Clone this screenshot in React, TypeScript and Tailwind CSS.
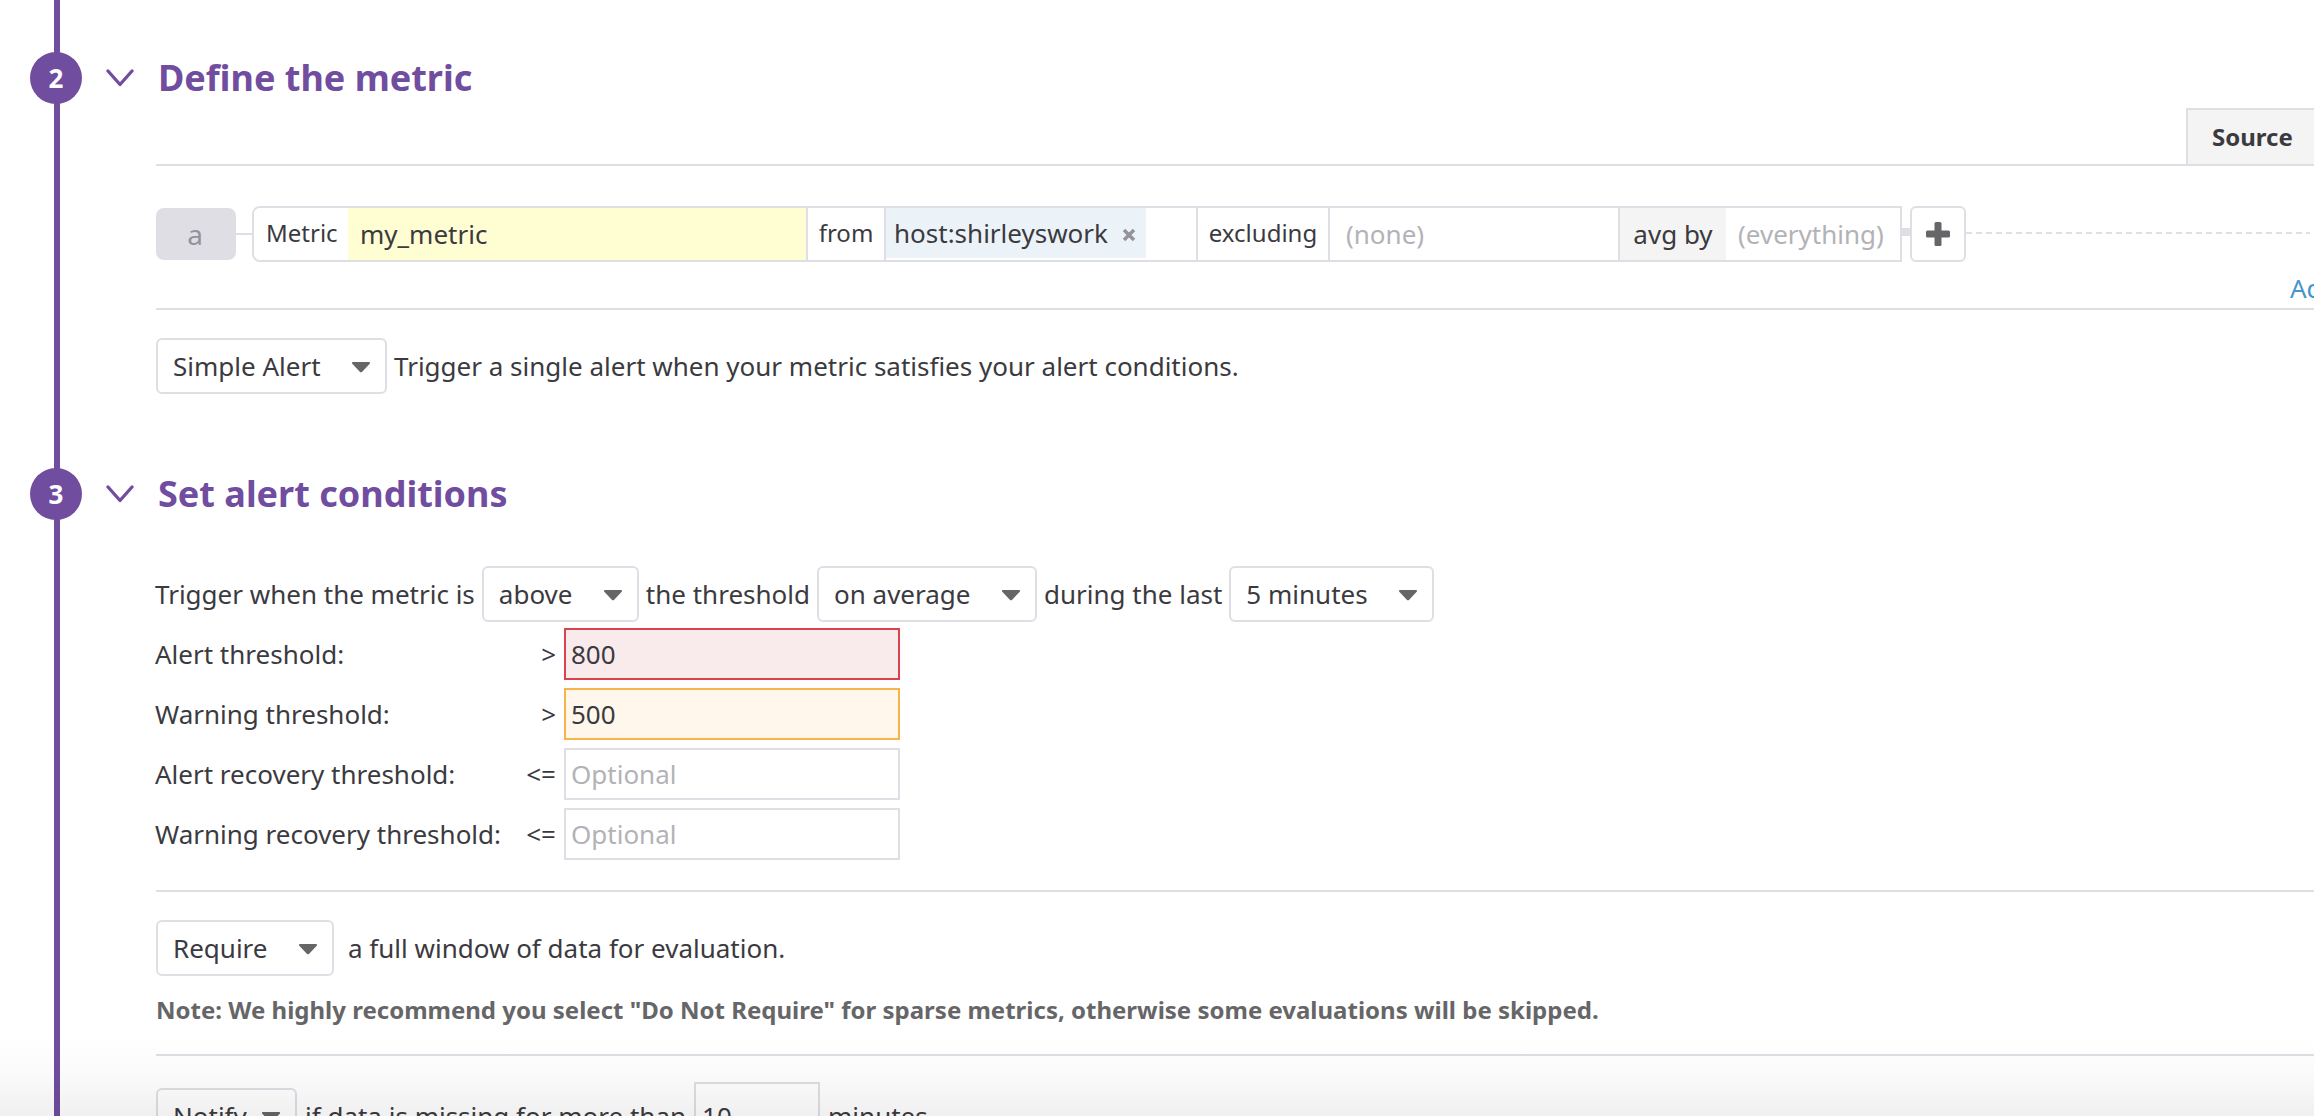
import type { ReactNode } from "react";

const label = "flex items-center bg-white pb-0.5 text-2xl";

function Step({ number, title, className, children }: { number: number; title: string; className: string; children: ReactNode }) {
  return (
    <section className={`relative pt-[52px] ${className}`}>
      <div className="absolute inset-y-0 left-[54px] w-1.5 bg-[#704d9f]" />
      <header className="relative flex h-[52px] items-center pl-[30px] text-[#704d9f]">
        <span className="flex size-[52px] items-center justify-center rounded-full bg-[#704d9f] text-[26px] font-bold text-white">{number}</span>
        <button type="button" aria-label={`Collapse ${title}`} className="ml-6 flex w-[50px]">
          <svg width="28" height="18" viewBox="0 0 28 18" fill="none" stroke="currentColor" strokeWidth="3.300" strokeLinecap="round" strokeLinejoin="round">
            <path d="M2 2 14 15.500 26 2" />
          </svg>
        </button>
        <h2 className="ml-0.5 text-4xl font-bold">{title}</h2>
      </header>
      <div className="pl-[155px]">{children}</div>
    </section>
  );
}

function Dropdown({ value, name, tight = false }: { value: string; name: string; tight?: boolean }) {
  return (
    <span className="relative inline-flex">
      <select
        aria-label={name}
        className={`h-14 appearance-none rounded-md border-2 border-[#dfdee4] bg-white pl-[15px] ${tight ? "pr-12" : "pr-16"}`}
      >
        <option>{value}</option>
      </select>
      <svg className="pointer-events-none absolute right-4 top-6 text-[#666668]" width="20" height="11" viewBox="0 0 20 11" fill="currentColor">
        <path d="M2 0h16c1 0 1.400 1 .7 1.700l-7.500 8c-.7.700-1.700.700-2.400 0l-7.500-8C.6 1 1 0 2 0Z" />
      </svg>
    </span>
  );
}

const thresholds = [
  { id: "alert", text: "Alert threshold:", sign: ">", value: "800", style: "border-[#d9434e] bg-[#f9ebec]" },
  { id: "warning", text: "Warning threshold:", sign: ">", value: "500", style: "border-[#f5b54a] bg-[#fff7ec]" },
  { id: "alert-recovery", text: "Alert recovery threshold:", sign: "<=", value: "", style: "border-[#dfdee4] bg-white" },
  { id: "warning-recovery", text: "Warning recovery threshold:", sign: "<=", value: "", style: "border-[#dfdee4] bg-white" },
];

function Query() {
  return (
    <div className="flex h-14 items-center">
      <span className="flex h-[52px] w-20 items-center justify-center rounded-lg bg-[#dfdee4] pr-0.5 text-[28px] text-[#949398]">a</span>
      <span className="h-0.5 w-4 bg-[#dfdee4]" />
      <div className="flex h-14 rounded-l-lg border-2 border-[#dfdee4]">
        <label htmlFor="metric" className={`${label} w-[94px] rounded-l-md pl-3`}>Metric</label>
        <input id="metric" defaultValue="my_metric" className="w-[460px] border-r-2 border-[#dfdee4] bg-[#fffed2] px-3" />
        <span className={`${label} w-[78px] justify-center border-r-2 border-[#dfdee4]`}>from</span>
        <div className="flex w-[312px] border-r-2 border-[#dfdee4]">
          <span className="flex h-[50px] w-[260px] items-center bg-[#ebf3f9] pl-2">
            host:shirleyswork
            <button type="button" aria-label="Remove host:shirleyswork" className="ml-3.5 mt-1 text-[#949398]">
              <svg width="14" height="14" viewBox="0 0 14 14" stroke="currentColor" strokeWidth="3.500">
                <path d="M2 2l10 10M12 2 2 12" />
              </svg>
            </button>
          </span>
        </div>
        <label htmlFor="excluding" className={`${label} w-[132px] justify-center border-r-2 border-[#dfdee4]`}>excluding</label>
        <input id="excluding" placeholder="(none)" className="w-[290px] border-r-2 border-[#dfdee4] px-4 placeholder:text-[#b3b2b7]" />
        <label htmlFor="group" className="flex w-[106px] items-center justify-center bg-[#f4f4f4]">avg by</label>
        <input id="group" placeholder="(everything)" className="w-[174px] pl-3 placeholder:text-[#b3b2b7]" />
      </div>
      <span className="mb-1 h-2 w-2 bg-[#dfdee4]" />
      <button type="button" aria-label="Add query" className="flex h-14 w-14 items-center justify-center rounded-md border-2 border-[#dfdee4] text-[#666668]">
        <svg width="24" height="24" viewBox="0 0 24 24" fill="currentColor">
          <rect x="8.500" width="7" height="24" rx="1.500" />
          <rect y="8.500" width="24" height="7" rx="1.500" />
        </svg>
      </button>
      <span className="mb-0.5 mr-1 h-0.5 flex-1 bg-[repeating-linear-gradient(90deg,#dfdee4_0_6px,transparent_6px_10px)]" />
    </div>
  );
}

export default function App() {
  return (
    <main className="relative h-screen overflow-hidden whitespace-nowrap bg-white font-['Noto_Sans',sans-serif] text-[26px] text-[#3b3a3f]">
      <Step number={2} title="Define the metric" className="pb-[22px]">
        <div className="ml-px mt-1 flex justify-end border-b-2 border-[#dfdee4]">
          <button type="button" className="h-14 w-32 border-l-2 border-t-2 border-[#dfdee4] bg-[#f4f4f4] pl-6 text-left text-2xl font-bold">Source</button>
        </div>
        <div className="ml-px border-b-2 border-[#dfdee4] pt-10">
          <Query />
          <div className="flex h-[46px] items-end justify-end">
            <a href="#advanced" className="w-6 overflow-hidden text-[#4595cb]">Ad</a>
          </div>
        </div>
        <div className="ml-px mt-7 flex items-center gap-[7px]">
          <Dropdown name="Alert type" value="Simple Alert" />
          <span>Trigger a single alert when your metric satisfies your alert conditions.</span>
        </div>
      </Step>

      <Step number={3} title="Set alert conditions" className="">
        <div className="mt-[46px] flex items-center gap-[7px]">
          <span>Trigger when the metric is</span>
          <Dropdown name="Comparison" value="above" />
          <span>the threshold</span>
          <Dropdown name="Aggregation" value="on average" />
          <span>during the last</span>
          <Dropdown name="Time window" value="5 minutes" />
        </div>
        <div className="mt-1.5 grid gap-2">
          {thresholds.map((row) => (
            <div key={row.id} className="flex h-[52px] items-center">
              <label htmlFor={row.id} className="w-[360px]">{row.text}</label>
              <span className="w-[41px] text-right">{row.sign}</span>
              <input id={row.id} defaultValue={row.value} placeholder="Optional" className={`ml-2 h-[52px] w-[336px] border-2 px-[5px] placeholder:text-[#b3b2b7] ${row.style}`} />
            </div>
          ))}
        </div>
        <div className="ml-px mt-[30px] border-y-2 border-[#dfdee4] pb-7 pt-7">
          <div className="flex items-center gap-3.5">
            <Dropdown name="Require full window" value="Require" />
            <span>a full window of data for evaluation.</span>
          </div>
          <p className="mt-[18px] text-2xl font-bold text-[#666668]">
            Note: We highly recommend you select "Do Not Require" for sparse metrics, otherwise some evaluations will be skipped.
          </p>
        </div>
        <div className="ml-px flex items-center gap-2 pt-[26px]">
          <Dropdown name="Missing data" value="Notify" tight />
          <label htmlFor="missing">if data is missing for more than</label>
          <input id="missing" defaultValue="10" className="h-[68px] w-[126px] border-2 border-[#dfdee4] bg-white px-1.5" />
          <span>minutes</span>
        </div>
      </Step>
      <div className="pointer-events-none absolute inset-x-0 bottom-0 h-20 bg-gradient-to-b from-transparent via-black/2 to-black/6" />
    </main>
  );
}
